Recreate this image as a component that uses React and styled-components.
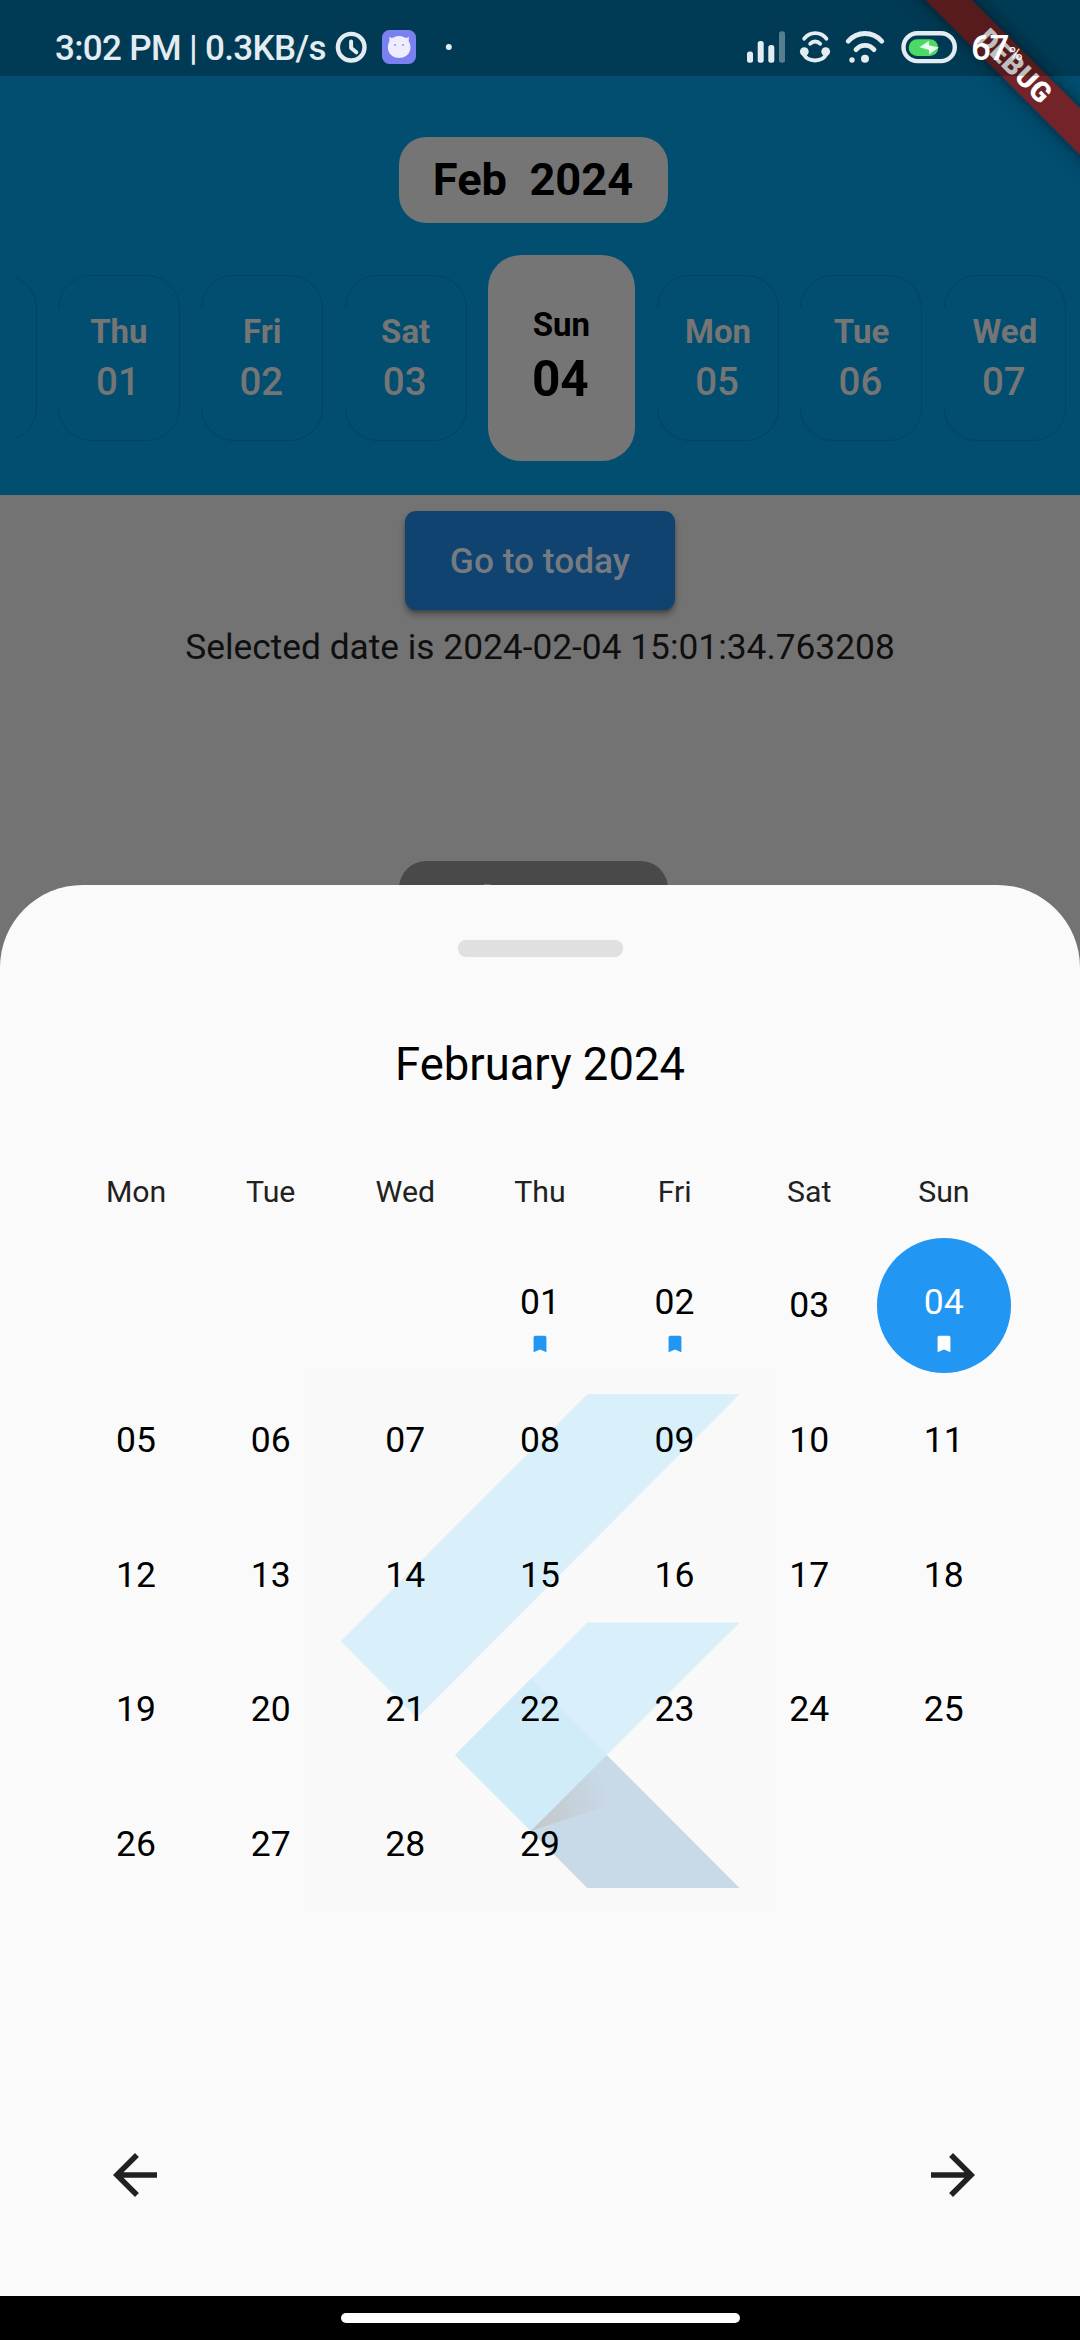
import React from "react";
import styled, { createGlobalStyle, css } from "styled-components";

const GlobalStyle = createGlobalStyle`
  *, *::before, *::after { box-sizing: border-box; }
  body { margin: 0; background: #737373; font-family: Roboto, "Noto Sans", sans-serif; }
  svg { display: block; flex: none; }
`;

const Phone = styled.div`
  position: relative;
  width: 1080px;
  height: 2340px;
  display: flex;
  flex-direction: column;
  background: #737373;
  overflow: hidden;
  white-space: nowrap;
`;

const Header = styled.header`
  height: 495px;
  flex: none;
  display: flex;
  flex-direction: column;
  align-items: center;
  background: #024e70;
`;

const StatusBar = styled.div`
  position: relative;
  z-index: 2;
  align-self: stretch;
  height: 76px;
  flex: none;
  display: flex;
  justify-content: space-between;
  padding: 26.5px 57px 0 55px;
  background: rgba(0, 0, 0, 0.25);
  color: #e3ecf0;
`;

const StatusGroup = styled.div`
  display: flex;
  align-items: center;
  height: 41px;
`;

const StatusText = styled.span`
  width: 280px;
  font-size: 35px;
  line-height: 41px;
  font-weight: 500;
  letter-spacing: -0.66px;
  padding-top: 3px;
`;

const Percent = styled.span`
  display: flex;
  align-items: baseline;
  width: 52px;
  margin-left: 13px;
  padding-top: 3px;
  font-size: 35px;
  line-height: 41px;
  font-weight: 500;
  letter-spacing: -1.5px;
  color: #ffffff;
`;

const PercentSign = styled.small`
  margin-left: 1px;
  font-size: 19px;
  font-weight: 400;
  line-height: 20px;
`;

const DebugBanner = styled.div`
  position: absolute;
  z-index: 1;
  left: 854.3px;
  top: 49.2px;
  width: 320px;
  height: 33px;
  transform: rotate(45deg);
  background: #742429;
  box-shadow: 0 0 17px rgba(0, 0, 0, 0.5);
  color: #ffffff;
  font-size: 28px;
  font-weight: 900;
  letter-spacing: 0.5px;
  line-height: 33px;
  text-align: center;
  text-indent: 2px;
`;

const MonthPill = styled.div`
  width: 269px;
  height: 86px;
  flex: none;
  margin: ${(p) => p.$top}px 14px 0 0;
  border-radius: 27.5px;
  background: ${(p) => p.$bg};
  color: ${(p) => p.$color};
  font-size: 45.2px;
  font-weight: 700;
  line-height: ${(p) => p.$line}px;
  text-align: center;
  white-space: pre;
`;

const DayStrip = styled.div`
  display: flex;
  align-items: center;
  gap: 21.4px;
  width: 1052px;
  height: 206px;
  margin-top: 32px;
  overflow: hidden;
`;

const DayCard = styled.div`
  position: relative;
  flex: none;
  display: flex;
  flex-direction: column;
  align-items: center;
  width: 122px;
  height: 166px;
  padding-top: 36px;
  gap: 8px;
  border: 1px solid #03435f;
  border-radius: 33px;
  color: #757575;
  ${(p) => p.$clipped && css`margin-left: -99.5px;`}
  ${(p) =>
    p.$selected
      ? css`
          width: 146.6px;
          height: 206px;
          margin-right: 1px;
          padding-top: 50px;
          gap: 6px;
          border: 0;
          background: #757575;
          color: #000000;
        `
      : css`
          &::before {
            content: "";
            position: absolute;
            left: -1px;
            top: 32px;
            width: 1px;
            height: 100px;
            background: #024e70;
          }
        `}
`;

const DayName = styled.span`
  font-size: 33px;
  font-weight: 700;
  line-height: 39px;
`;

const DayNumber = styled.span`
  margin-right: 2px;
  font-size: ${(p) => (p.$selected ? 49.5 : 38.5)}px;
  font-weight: ${(p) => (p.$selected ? 700 : 500)};
  line-height: ${(p) => (p.$selected ? 58 : 45)}px;
`;

const Body = styled.main`
  height: 390px;
  flex: none;
  display: flex;
  flex-direction: column;
  align-items: center;
  overflow: hidden;
`;

const TodayButton = styled.button`
  width: 270px;
  height: 99px;
  flex: none;
  margin-top: 16px;
  padding: 0;
  border: 0;
  border-radius: 11px;
  background: #104370;
  box-shadow: 0 5px 6px rgba(0, 0, 0, 0.28), 0 2px 3px rgba(0, 0, 0, 0.16);
  color: #757b80;
  font: 500 35.3px/100px Roboto, sans-serif;
`;

const SelectedDate = styled.p`
  height: 42px;
  margin: 16px 0 0;
  color: #0f0f0f;
  font-size: 35.3px;
  line-height: 43px;
`;

const Sheet = styled.section`
  flex: 1;
  display: flex;
  flex-direction: column;
  align-items: center;
  border-radius: 82.5px 82.5px 0 0;
  background: #fafafa;
`;

const Handle = styled.div`
  width: 165px;
  height: 16.5px;
  flex: none;
  margin-top: 55px;
  border-radius: 8px;
  background: #e0e0e0;
`;

const SheetTitle = styled.h1`
  height: 54px;
  margin: 81px 0 0;
  color: #000000;
  font-size: 45.4px;
  font-weight: 400;
  line-height: 54px;
`;

const WeekRow = styled.div`
  display: grid;
  grid-template-columns: repeat(7, 1fr);
  width: 942.5px;
  height: 36px;
  margin-top: 82px;
  color: #212121;
  font-size: 30.25px;
  line-height: 36px;
  text-align: center;
`;

const MonthGrid = styled.div`
  display: grid;
  grid-template-columns: repeat(7, 134.64px);
  grid-template-rows: repeat(5, 134.64px);
  width: 942.5px;
  margin-top: 28.5px;
  overflow: hidden;
`;

const Watermark = styled.div`
  grid-column: 1 / -1;
  grid-row: 2 / span 4;
  justify-self: center;
  width: 472.6px;
  background: #f9f9f9;
`;

const DateCell = styled.div`
  grid-column: ${(p) => p.$col};
  grid-row: ${(p) => p.$row};
  z-index: 1;
  display: flex;
  flex-direction: column;
  align-items: center;
  gap: 10px;
  padding-top: ${(p) => (p.$marked ? 42.5 : 46.3)}px;
  border-radius: 50%;
  background: ${(p) => (p.$selected ? "#2196f3" : "transparent")};
  color: ${(p) => (p.$selected ? "#ffffff" : "#000000")};
  font-size: 35.5px;
  line-height: 42px;
`;

const BookmarkTint = styled.span`
  color: ${(p) => (p.$selected ? "#ffffff" : "#2196f3")};
`;

const SheetFooter = styled.div`
  display: flex;
  justify-content: space-between;
  width: 884px;
  margin: 230.6px 0 0 8px;
  color: #212121;
`;

const NavBar = styled.footer`
  height: 44px;
  flex: none;
  display: flex;
  justify-content: center;
  padding-top: 17px;
  background: #000000;
`;

const NavPill = styled.div`
  width: 399px;
  height: 10px;
  border-radius: 5px;
  background: #ffffff;
`;

const StatusIcons = () => (
  <svg width="212" height="40" viewBox="747 27 212 40" fill="none">
    <g fill="#e3ecf0">
      <rect x="748" y="51.5" width="6" height="11.2" rx="2.5" />
      <rect x="758.7" y="41" width="6" height="21.7" rx="2.5" />
      <rect x="769.3" y="45" width="6" height="17.7" rx="2.5" />
      <rect x="780" y="31.3" width="6" height="31.4" rx="2.5" opacity=".38" />
    </g>
    <g stroke="#e3ecf0" strokeWidth="3.9" strokeLinecap="round">
      <path d="M805.2 38.6c5.600-7.300 16.600-7.300 22.200 0M811.200 43.700c2.600-2.900 7.300-2.900 9.900 0" />
      <path d="M804.500 53c2.500 9.900 20.500 9.900 23 0" />
    </g>
    <circle cx="805.300" cy="51.600" r="4.400" fill="#e3ecf0" />
    <circle cx="826.700" cy="51.600" r="4.400" fill="#e3ecf0" />
    <g stroke="#e3ecf0" strokeWidth="4.800" strokeLinecap="round">
      <path d="M849.200 41.300c9-10.400 24.600-10.400 33.600 0" />
      <path d="M857 49.600c4.800-5.700 13.200-5.700 18 0" />
    </g>
    <circle cx="866" cy="58.700" r="4" fill="#e3ecf0" />
    <circle cx="853" cy="60" r="2.700" fill="#e3ecf0" />
    <rect x="904.500" y="33.300" width="51.300" height="27.800" rx="13.900" stroke="#e3ecf0" strokeWidth="4.400" />
    <rect x="909.700" y="39.300" width="29.600" height="16.700" rx="8.300" fill="#4cd964" />
    <path d="M930 40.700V45.200L939.600 47.400 930 54.400V49.900L920.500 47.300z" fill="#e6ffec" />
  </svg>
);

const AppIcons = () => (
  <svg width="120" height="40" viewBox="334 27 120 40" fill="none">
    <circle cx="350.200" cy="47.200" r="13.300" stroke="#e3ecf0" strokeWidth="4.400" />
    <path d="M350.100 41.500v6.500l5.200 4.300" stroke="#e3ecf0" strokeWidth="4" strokeLinecap="round" strokeLinejoin="round" />
    <rect x="381" y="30" width="34" height="34" rx="7.500" fill="#7b80f1" />
    <path
      d="M388.300 36.800q2 1.800 4.200.600 5.500-2.800 11.200 0 2.200 1.200 4.200-.600l-.200 4.200q1.800 3 1.800 6.200c0 6.200-5 10.800-11.400 10.800s-11.300-4.600-11.300-10.800q0-3.200 1.700-6.200z"
      fill="#eeecff"
    />
    <rect x="393" y="44" width="2" height="2" fill="#a9a8f5" />
    <rect x="401" y="44" width="2" height="2" fill="#a9a8f5" />
    <circle cx="447.800" cy="47" r="3" fill="#e3ecf0" />
  </svg>
);

const FlutterLogo = () => (
  <svg width="472.6" height="538.5" viewBox="304 1372.700 472.600 538.500">
    <defs>
      <linearGradient id="fold" gradientUnits="userSpaceOnUse" x1="535" y1="1820" x2="606" y2="1790">
        <stop offset="0" stopColor="#c4c8cc" />
        <stop offset="1" stopColor="#c8d9e7" />
      </linearGradient>
    </defs>
    <path d="M587.300 1394H739.700L417 1717.800 340.700 1641z" fill="#d9effa" />
    <path d="M587.300 1622.100H739.700L530.700 1830.600 455 1754.600z" fill="#d9effa" />
    <path d="M606.700 1754.600 739.500 1887.600H587.300L530.700 1830.600z" fill="#c8d9e7" />
    <path d="M530.700 1830.600 606.700 1754.600 606 1806z" fill="url(#fold)" />
    <path d="M530.700 1678.800 606.700 1754.600 530.700 1830.600 455 1754.600z" fill="#d0ecf8" />
  </svg>
);

const Bookmark = () => (
  <svg width="22" height="22" viewBox="0 0 24 24">
    <path d="M17 3H7c-1.100 0-2 .900-2 2v16l7-3 7 3V5c0-1.100-.900-2-2-2z" fill="currentColor" />
  </svg>
);

const Arrow = ({ forward }) => (
  <svg width="66" height="66" viewBox="0 0 24 24" fill="currentColor">
    <path
      d={
        forward
          ? "M12 4l-1.410 1.410L16.170 11H4v2h12.170l-5.580 5.590L12 20l8-8z"
          : "M20 11H7.830l5.590-5.590L12 4l-8 8 8 8 1.410-1.410L7.830 13H20v-2z"
      }
    />
  </svg>
);

const WEEK = [
  ["Thu", "01"],
  ["Fri", "02"],
  ["Sat", "03"],
  ["Sun", "04"],
  ["Mon", "05"],
  ["Tue", "06"],
  ["Wed", "07"],
];
const WEEKDAYS = ["Mon", "Tue", "Wed", "Thu", "Fri", "Sat", "Sun"];
const DATES = Array.from({ length: 29 }, (_, i) => i + 1);
const MARKED = [1, 2, 4];
const SELECTED = 4;
const OFFSET = 2;

export default function App() {
  return (
    <Phone>
      <GlobalStyle />
      <DebugBanner>DEBUG</DebugBanner>
      <Header>
        <StatusBar>
          <StatusGroup>
            <StatusText>3:02 PM | 0.3KB/s</StatusText>
            <AppIcons />
          </StatusGroup>
          <StatusGroup>
            <StatusIcons />
            <Percent>
              67<PercentSign>%</PercentSign>
            </Percent>
          </StatusGroup>
        </StatusBar>
        <MonthPill $top={61} $line={85} $bg="#757575" $color="#000000">
          {"Feb  2024"}
        </MonthPill>
        <DayStrip>
          <DayCard $clipped />
          {WEEK.map(([name, num]) => {
            const selected = Number(num) === SELECTED;
            return (
              <DayCard key={num} $selected={selected}>
                <DayName>{name}</DayName>
                <DayNumber $selected={selected}>{num}</DayNumber>
              </DayCard>
            );
          })}
        </DayStrip>
      </Header>
      <Body>
        <TodayButton>Go to today</TodayButton>
        <SelectedDate>Selected date is 2024-02-04 15:01:34.763208</SelectedDate>
        <MonthPill $top={192.5} $line={82} $bg="#494949" $color="#757575">
          {"Feb  2024"}
        </MonthPill>
      </Body>
      <Sheet>
        <Handle />
        <SheetTitle>February 2024</SheetTitle>
        <WeekRow>
          {WEEKDAYS.map((d) => (
            <span key={d}>{d}</span>
          ))}
        </WeekRow>
        <MonthGrid>
          <Watermark>
            <FlutterLogo />
          </Watermark>
          {DATES.map((d) => {
            const slot = d + OFFSET;
            const marked = MARKED.includes(d);
            const selected = d === SELECTED;
            return (
              <DateCell
                key={d}
                $row={Math.floor(slot / 7) + 1}
                $col={(slot % 7) + 1}
                $marked={marked}
                $selected={selected}
              >
                <span>{String(d).padStart(2, "0")}</span>
                {marked && (
                  <BookmarkTint $selected={selected}>
                    <Bookmark />
                  </BookmarkTint>
                )}
              </DateCell>
            );
          })}
        </MonthGrid>
        <SheetFooter>
          <Arrow />
          <Arrow forward />
        </SheetFooter>
      </Sheet>
      <NavBar>
        <NavPill />
      </NavBar>
    </Phone>
  );
}
